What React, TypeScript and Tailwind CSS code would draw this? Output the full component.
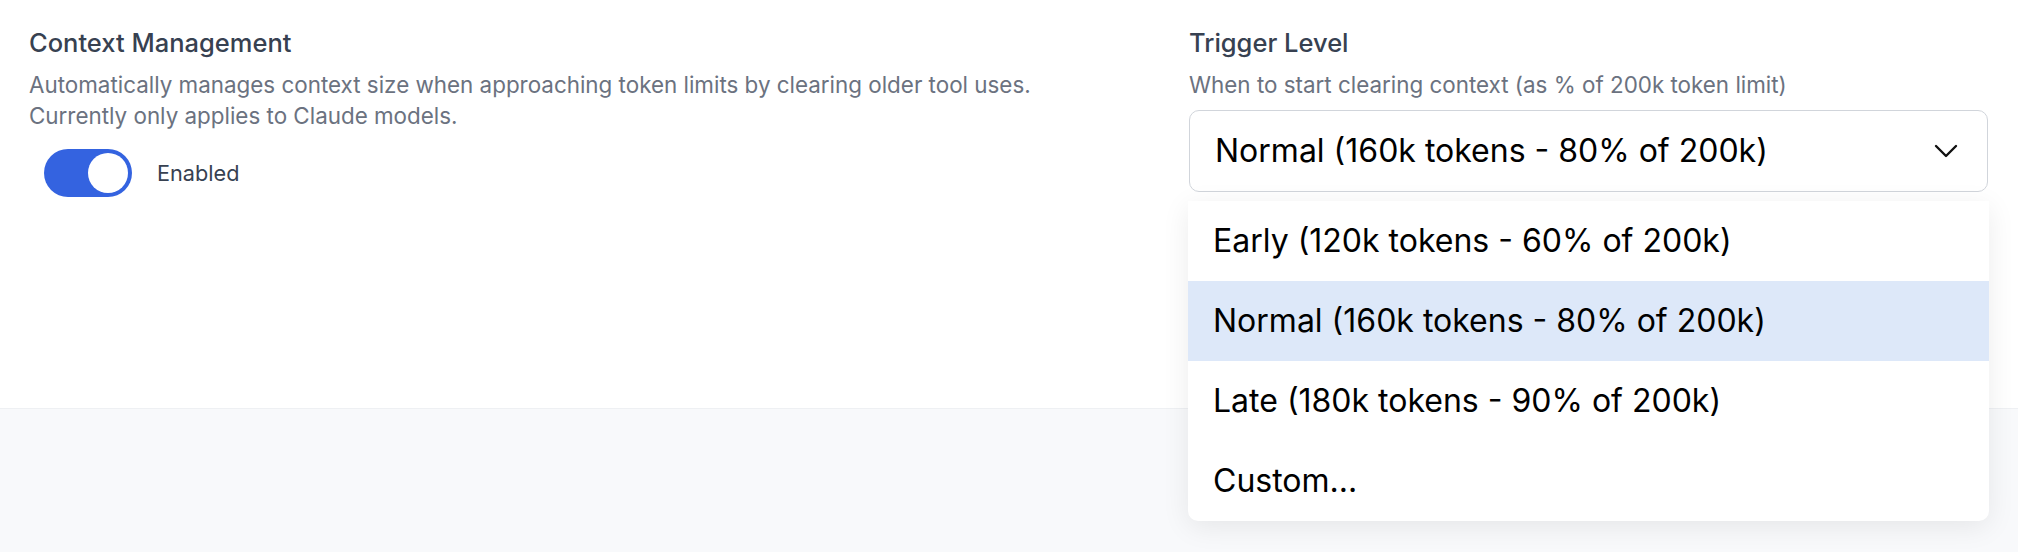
import React, { useState } from 'react';

const options = [
  'Early (120k tokens - 60% of 200k)',
  'Normal (160k tokens - 80% of 200k)',
  'Late (180k tokens - 90% of 200k)',
  'Custom...',
];

const App: React.FC = () => {
  const [enabled, setEnabled] = useState(true);
  const [selected, setSelected] = useState(1);

  return (
    <div className="min-h-[552px] bg-[#f8f9fb] font-['Inter',sans-serif]">
      <div className="h-[409px] bg-white border-b border-[#eef0f3] flex pl-[29px] pr-[30px] pt-[24px]">
        {/* left: context management */}
        <div className="flex-1">
          <h3 className="text-[25.5px] leading-[37px] font-medium text-[#374151]">Context Management</h3>
          <p className="mt-[8px] text-[22.4px] leading-[31px] text-[#6b7280]">
            Automatically manages context size when approaching token limits by clearing older tool uses.
            <br />
            Currently only applies to Claude models.
          </p>
          <div className="mt-[18px] ml-[15px] flex items-center gap-[25px]">
            <button
              onClick={() => setEnabled(!enabled)}
              className={`w-[88px] h-[48px] rounded-full p-[4px] flex items-center ${enabled ? 'bg-[#3463e0] justify-end' : 'bg-gray-300 justify-start'}`}
            >
              <span className="w-[40px] h-[40px] rounded-full bg-white"></span>
            </button>
            <span className="text-[21.7px] text-[#374151]">Enabled</span>
          </div>
        </div>

        {/* right: trigger level */}
        <div className="w-[799px]">
          <h3 className="text-[25.5px] leading-[37px] font-medium text-[#374151]">Trigger Level</h3>
          <p className="mt-[8px] text-[22.4px] leading-[31px] text-[#6b7280]">
            When to start clearing context (as % of 200k token limit)
          </p>
          <div className="relative mt-[10px]">
            <div className="h-[82px] rounded-[10px] border-[1.5px] border-[#d1d5db] flex items-center justify-between pl-[25px] pr-[29px]">
              <span className="text-[32px] text-black">{options[selected]}</span>
              <svg width="24" height="14" viewBox="0 0 24 14" fill="none">
                <path d="M2 2 L12 12 L22 2" stroke="#111" strokeWidth="2.4" strokeLinecap="round" strokeLinejoin="round" />
              </svg>
            </div>
            <div className="absolute left-[-1px] right-[-1px] top-[91px] bg-white rounded-b-[10px] shadow-[0_6px_28px_rgba(0,0,0,0.08)] overflow-hidden z-10">
              {options.map((opt, i) => (
                <div
                  key={opt}
                  onClick={() => setSelected(i)}
                  className={`h-[80px] flex items-center pl-[25px] text-[32px] text-black ${i === selected ? 'bg-[#dde8f9]' : ''}`}
                >
                  {opt}
                </div>
              ))}
            </div>
          </div>
        </div>
      </div>
    </div>
  );
};

export default App;
